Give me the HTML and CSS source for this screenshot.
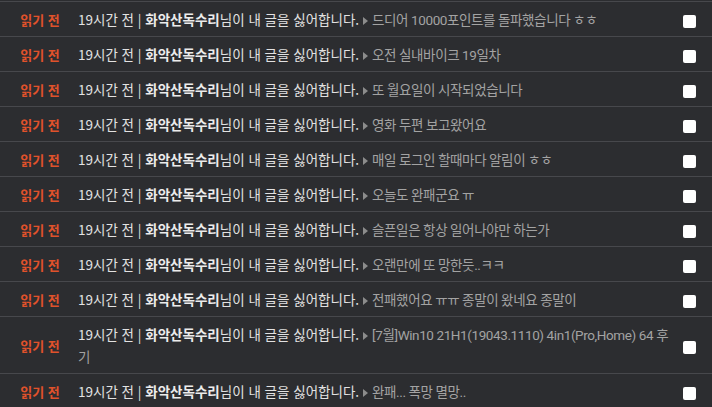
FILE: index.html
```html
<!DOCTYPE html>
<html lang="ko">

<head>
  <meta charset="UTF-8">
  <meta name="viewport" content="width=device-width, initial-scale=1.0">
  <title>알림</title>
  <link rel="stylesheet" href="styles.css">
</head>

<body>
  <div class="list">
    <div class="row">
      <span class="state">읽기 전</span>
      <p class="msg">19시간 전 | <b>화악산독수리</b>님이 내 글을 싫어합니다.<i class="arrow"></i><span class="post">드디어 10000포인트를 돌파했습니다 ㅎㅎ</span></p>
      <span class="check"><input type="checkbox"></span>
    </div>
    <div class="row">
      <span class="state">읽기 전</span>
      <p class="msg">19시간 전 | <b>화악산독수리</b>님이 내 글을 싫어합니다.<i class="arrow"></i><span class="post">오전 실내바이크 19일차</span></p>
      <span class="check"><input type="checkbox"></span>
    </div>
    <div class="row">
      <span class="state">읽기 전</span>
      <p class="msg">19시간 전 | <b>화악산독수리</b>님이 내 글을 싫어합니다.<i class="arrow"></i><span class="post">또 월요일이 시작되었습니다</span></p>
      <span class="check"><input type="checkbox"></span>
    </div>
    <div class="row">
      <span class="state">읽기 전</span>
      <p class="msg">19시간 전 | <b>화악산독수리</b>님이 내 글을 싫어합니다.<i class="arrow"></i><span class="post">영화 두편 보고왔어요</span></p>
      <span class="check"><input type="checkbox"></span>
    </div>
    <div class="row">
      <span class="state">읽기 전</span>
      <p class="msg">19시간 전 | <b>화악산독수리</b>님이 내 글을 싫어합니다.<i class="arrow"></i><span class="post">매일 로그인 할때마다 알림이 ㅎㅎ</span></p>
      <span class="check"><input type="checkbox"></span>
    </div>
    <div class="row">
      <span class="state">읽기 전</span>
      <p class="msg">19시간 전 | <b>화악산독수리</b>님이 내 글을 싫어합니다.<i class="arrow"></i><span class="post">오늘도 완패군요 ㅠ</span></p>
      <span class="check"><input type="checkbox"></span>
    </div>
    <div class="row">
      <span class="state">읽기 전</span>
      <p class="msg">19시간 전 | <b>화악산독수리</b>님이 내 글을 싫어합니다.<i class="arrow"></i><span class="post">슬픈일은 항상 일어나야만 하는가</span></p>
      <span class="check"><input type="checkbox"></span>
    </div>
    <div class="row">
      <span class="state">읽기 전</span>
      <p class="msg">19시간 전 | <b>화악산독수리</b>님이 내 글을 싫어합니다.<i class="arrow"></i><span class="post">오랜만에 또 망한듯..ㅋㅋ</span></p>
      <span class="check"><input type="checkbox"></span>
    </div>
    <div class="row">
      <span class="state">읽기 전</span>
      <p class="msg">19시간 전 | <b>화악산독수리</b>님이 내 글을 싫어합니다.<i class="arrow"></i><span class="post">전패했어요 ㅠㅠ 종말이 왔네요 종말이</span></p>
      <span class="check"><input type="checkbox"></span>
    </div>
    <div class="row">
      <span class="state">읽기 전</span>
      <p class="msg">19시간 전 | <b>화악산독수리</b>님이 내 글을 싫어합니다.<i class="arrow"></i><span class="post">[7월]Win10 21H1(19043.1110) 4in1(Pro,Home) 64 후기</span></p>
      <span class="check"><input type="checkbox"></span>
    </div>
    <div class="row">
      <span class="state">읽기 전</span>
      <p class="msg">19시간 전 | <b>화악산독수리</b>님이 내 글을 싫어합니다.<i class="arrow"></i><span class="post">완패... 폭망 멸망..</span></p>
      <span class="check"><input type="checkbox"></span>
    </div>
  </div>
</body>

</html>
```

FILE: styles.css
```css
body {
  margin: 0;
  background-color: #2c2d30;
  font-family: "Noto Sans CJK KR", sans-serif;
  font-size: 13.5px;
  color: #e2e2e2;
}

.list {
  margin-top: 1px;
  border-top: 1px solid #47484c;
}

.row {
  display: grid;
  grid-template-columns: 78px 1fr 40px;
  align-items: center;
  border-bottom: 1px solid #47484c;
}

.state {
  color: #e0522b;
  font-weight: bold;
  font-size: 13px;
  text-align: center;
  padding-left: 2px;
}

.msg {
  margin: 0;
  padding: 6px 0;
  line-height: 22px;
}

.msg b {
  font-weight: bold;
  color: #ececec;
}

.arrow {
  display: inline-block;
  width: 0;
  height: 0;
  border-left: 5px solid #8c8c8c;
  border-top: 4px solid transparent;
  border-bottom: 4px solid transparent;
  margin: 0 4px 0 4px;
}

/* latin in titles is narrower in the original */
.post {
  color: #a3a3a3;
  font-family: Roboto, "Noto Sans CJK KR", sans-serif;
  letter-spacing: -0.4px;
  line-height: 16px;
}

.check {
  display: flex;
  justify-content: center;
  padding-right: 6px;
  margin-top: 4px;
}

.check input {
  appearance: none;
  width: 13px;
  height: 13px;
  margin: 0;
  background-color: #fff;
  border-radius: 2px;
}
```
